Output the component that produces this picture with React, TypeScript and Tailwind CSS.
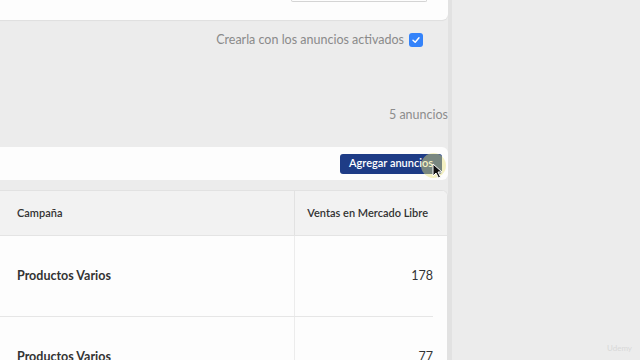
import { JSX } from "react";

const rows = [
  { name: "Productos Varios", sales: 178 },
  { name: "Productos Varios", sales: 77 },
];

function Cursor(): JSX.Element {
  return (
    <div className="absolute left-[421px] top-[153px] w-[25px] h-[25px] rounded-full bg-[#e8e27a]/45">
      <svg width="12" height="16" viewBox="0 0 12 16" className="absolute left-[11px] top-[10px]">
        <path d="M1 1 L1 13 L4 10 L6.5 15 L8.5 14 L6 9 L10 9 Z" fill="#111" stroke="#fff" strokeWidth="1" />
      </svg>
    </div>
  );
}

export default function App(): JSX.Element {
  return (
    <div
      className="relative w-[640px] h-[360px] overflow-hidden bg-[#ececec] text-[#333]"
      style={{ fontFamily: 'Lato, "Liberation Sans", sans-serif' }}
    >
      <div className="flex h-full">
        <div className="w-[448px] flex flex-col">
          {/* top card */}
          <div className="h-[20px] bg-[#fdfdfd] rounded-br-md shadow-[0_1px_1px_rgba(0,0,0,0.06)] flex justify-end pr-[21px]">
            <div className="w-[136px] h-[2px] border-b border-x border-[#d4d4d4] rounded-b-sm" />
          </div>

          <div className="mt-[12px] h-[16px] flex items-center justify-end gap-[5px] pr-[25px]">
            <span className="text-[12.5px] text-[#8a8a8a]">Crearla con los anuncios activados</span>
            <span className="w-[14px] h-[14px] rounded-[3px] bg-[#3483fa] flex items-center justify-center">
              <svg width="10" height="10" viewBox="0 0 10 10">
                <path d="M2 5.2 L4.2 7.3 L8 2.8" fill="none" stroke="#fff" strokeWidth="1.4" strokeLinecap="round" strokeLinejoin="round" />
              </svg>
            </span>
          </div>

          <div className="mt-[59px] h-[16px] flex items-center justify-end">
            <span className="text-[12.5px] text-[#8c8c8c]">5 anuncios</span>
          </div>

          {/* toolbar */}
          <div className="mt-[24px] h-[33px] bg-[#fdfdfd] rounded-r-md flex items-center justify-end pr-[6px]">
            <button className="h-[20px] w-[102px] rounded-[3px] bg-[#1e3c86] text-white text-[11px] font-semibold flex items-center justify-center">
              Agregar anuncios
            </button>
          </div>

          {/* table */}
          <div className="mt-[10px] flex-1 bg-[#fdfdfd] rounded-tr-md border-t border-r border-[#e2e2e2] overflow-hidden">
            <div className="h-[45px] bg-[#f2f2f2] border-b border-[#e4e4e4] flex text-[11px] font-semibold text-[#333]">
              <div className="w-[295px] flex items-center pl-[17px] border-r border-[#e2e2e2]">Campaña</div>
              <div className="flex-1 flex items-center justify-end pr-[19px]">Ventas en Mercado Libre</div>
            </div>
            {rows.map((r, i) => (
              <div key={i} className="flex flex-col">
                <div className="h-[80px] flex">
                  <div className="w-[295px] flex items-center pl-[17px] border-r border-[#ececec] text-[12.5px] font-bold text-[#333]">
                    {r.name}
                  </div>
                  <div className="flex-1 flex items-center justify-end pr-[14px] text-[12.5px] text-[#333]">{r.sales}</div>
                </div>
                <div className="h-[1px] mr-[14px] bg-[#e6e6e6]" />
              </div>
            ))}
          </div>
        </div>
        <div className="w-[4px] bg-[#e2e2e2]" />
        <div className="flex-1" />
      </div>

      <Cursor />
      <span className="absolute right-[8px] bottom-[6px] text-[8px] text-[#d8d8d8]">Udemy</span>
    </div>
  );
}
